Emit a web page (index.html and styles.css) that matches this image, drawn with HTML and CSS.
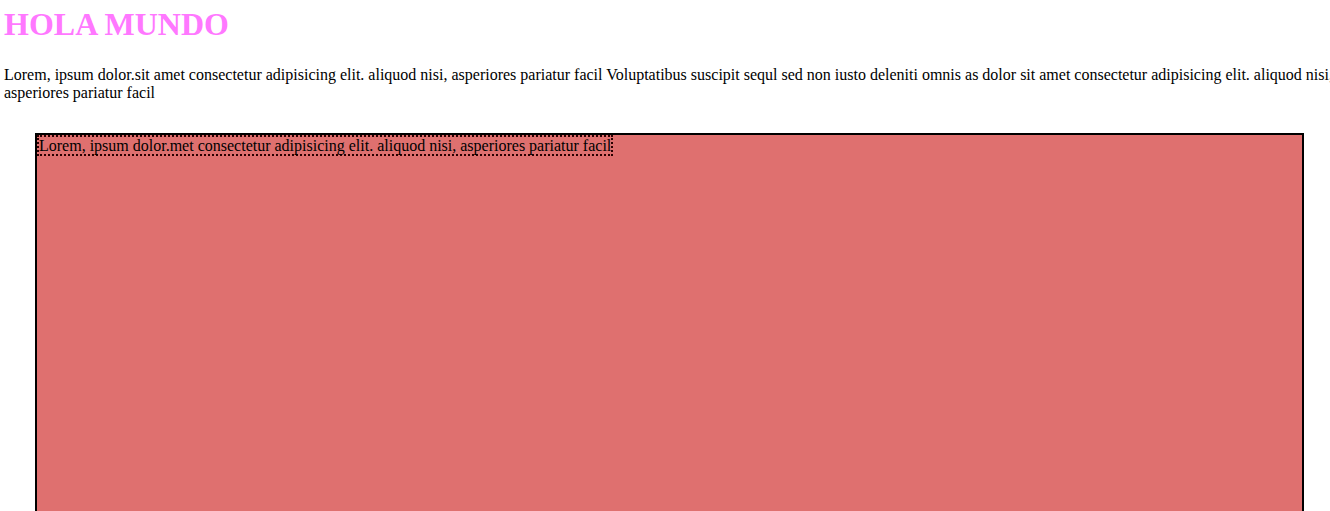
FILE: index.html
```html
<!DOCTYPE html>
<html lang="es">
<head>
<meta charset="utf-8">
<title>Hola Mundo</title>
<link rel="stylesheet" href="styles.css">
</head>
<body>
<h1 class="title">HOLA MUNDO</h1>
<p class="intro">Lorem, ipsum dolor.sit amet consectetur adipisicing elit. aliquod nisi, asperiores pariatur facil Voluptatibus suscipit sequl sed non iusto deleniti omnis as dolor sit amet consectetur adipisicing elit. aliquod nisi, asperiores pariatur facil</p>
<div class="box"><span class="inner">Lorem, ipsum dolor.met consectetur adipisicing elit. aliquod nisi, asperiores pariatur facil</span></div>
</body>
</html>
```
FILE: styles.css
```css
html, body {
  overflow: hidden;
}
body {
  margin: 0;
  padding: 0 4px;
  font-family: "Liberation Serif", "Times New Roman", serif;
  font-size: 16px;
  color: #000;
  background: #fff;
}
.title {
  margin: 6px 0 23px;
  font-size: 32px;
  font-weight: bold;
  color: #ff78ff;
}
.intro {
  width: 1345px;
  margin: 0;
}
.box {
  margin: 31px 0 0 31px;
  padding-top: 2px;
  width: 1265px;
  height: 600px;
  border: 2px solid #000;
  background: #df706f;
}
.inner {
  border: 2px dotted #2a0000;
}
```
